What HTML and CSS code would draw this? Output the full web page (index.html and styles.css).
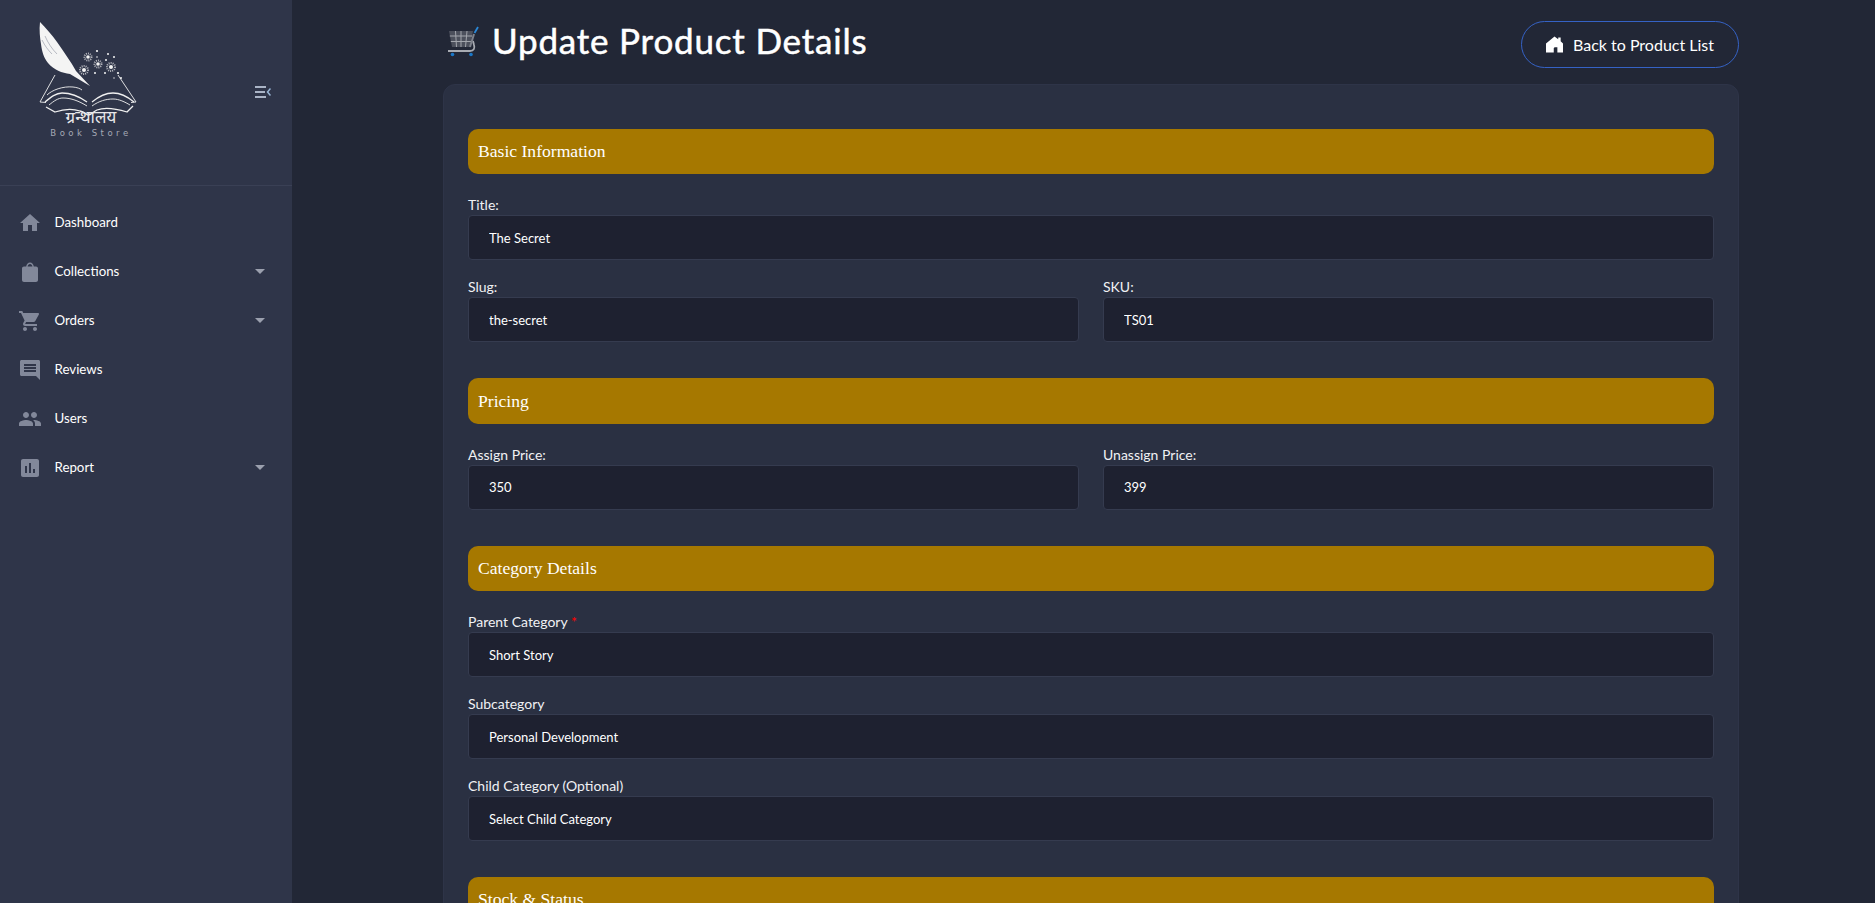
FILE: index.html
```html
<!DOCTYPE html>
<html lang="en">
<head>
<meta charset="utf-8">
<title>Update Product Details</title>
<link rel="stylesheet" href="styles.css">
</head>
<body>
<div class="app">
  <aside class="sidebar">
    <div class="brand">
      <svg class="logo" viewBox="0 0 110 125" width="110" height="125" aria-label="Book Store logo">
        <path class="ink" d="M0 2C-1 10 0 18 1 24c1 8 3 14 7 19 6 7 14 10 22 11l20 12-14-15C31 42 24 32 17 22 12 15 6 8 0 2z"/>
        <path class="slit" d="M2 20c3 6 6 10 10 14M5 16c3 7 7 13 12 18"/>
        <g class="ink-line">
          <path class="thin" d="M15 55 0 82l6 .5M7 75c5-5 16-9 26-8 4 .4 7 1.500 9 3"/>
          <path class="thin" d="M78 55 96 82l-5 .5"/>
          <path d="M5 82c6-5 11-9 17-9 9 0 18 4 25 9"/>
          <path class="thin" d="M9 85c5-4 9-7 14-7 8 0 16 3 24 8"/>
          <path d="M52 82c6-5 14-9 21-9 8 0 15 4 21 9"/>
          <path class="thin" d="M52 86c7-5 14-7 21-7 6 0 12 3 17 6"/>
          <path d="M6 87 15 92c9-3 19-3 25-1 4 1 6 3 8 4 3 0 5-3 9-5 8-3 20-1 30 2l6-6"/>
        </g>
        <g class="halo">
          <circle cx="48" cy="37" r="3.500"/><circle cx="58" cy="44" r="3.500"/><circle cx="71" cy="47" r="4"/><circle cx="44" cy="50" r="4"/>
        </g>
        <g class="ink">
          <circle cx="48" cy="37" r="1.800"/><circle cx="58" cy="44" r="1.800"/><circle cx="71" cy="47" r="2"/><circle cx="44" cy="50" r="2"/>
          <circle cx="57" cy="31" r="1.100"/><circle cx="68" cy="34" r="1"/><circle cx="74" cy="37" r="1"/><circle cx="66" cy="40" r="1"/><circle cx="57" cy="37" r=".8"/>
          <circle cx="78" cy="53" r="1.100"/><circle cx="65" cy="53" r="1"/><circle cx="55" cy="53" r="1"/><circle cx="81" cy="58" r="1"/><circle cx="74" cy="58" r=".7"/>
        </g>
        <text class="logo-hi" x="51" y="103" text-anchor="middle">ग्रन्थालय</text>
        <text class="logo-en" x="51" y="116" text-anchor="middle">Book Store</text>
      </svg>
      <svg class="toggle" viewBox="0 0 16 12" width="16" height="12" aria-hidden="true">
        <path d="M0 1h11M0 6h10M0 11h11"/>
        <path class="toggle-chev" d="M15.500 2.500 12.500 6l3 3.500"/>
      </svg>
    </div>
    <nav class="nav">
      <a class="nav-item"><svg class="nav-icon" viewBox="0 0 24 24"><path d="M10 20v-6h4v6h5v-8h3L12 3 2 12h3v8z"/></svg><span class="nav-label">Dashboard</span></a>
      <a class="nav-item"><svg class="nav-icon" viewBox="0 0 24 24"><path fill-rule="evenodd" d="M18 6.500h-2.200C15.600 4.200 14 2.500 12 2.500S8.400 4.200 8.200 6.500H6c-1.100 0-2 .9-2 2V20c0 1.100.9 2 2 2h12c1.100 0 2-.9 2-2V8.500c0-1.100-.9-2-2-2zM12 4c1.200 0 2.200 1 2.400 2.500H9.600C9.800 5 10.800 4 12 4z"/></svg><span class="nav-label">Collections</span><i class="caret"></i></a>
      <a class="nav-item"><svg class="nav-icon" viewBox="0 0 24 24"><path d="M7 18c-1.100 0-1.990.9-1.990 2S5.900 22 7 22s2-.9 2-2-.9-2-2-2zM1 2v2h2l3.600 7.590-1.350 2.450c-.16.28-.25.61-.25.96 0 1.100.9 2 2 2h12v-2H7.420c-.14 0-.25-.11-.25-.25l.03-.12.9-1.630h7.450c.75 0 1.410-.41 1.750-1.030l3.580-6.490c.08-.14.12-.31.12-.48 0-.55-.45-1-1-1H5.210l-.94-2H1zm16 16c-1.100 0-1.990.9-1.990 2s.89 2 1.990 2 2-.9 2-2-.9-2-2-2z"/></svg><span class="nav-label">Orders</span><i class="caret"></i></a>
      <a class="nav-item"><svg class="nav-icon" viewBox="0 0 24 24"><path fill-rule="evenodd" d="M3.500 2h17c.8 0 1.500.7 1.500 1.500V22l-4-4H3.500C2.700 18 2 17.300 2 16.500v-13C2 2.700 2.700 2 3.500 2zM6 6v2h12V6H6zm0 3v2h12V9H6zm0 3v2h12v-2H6z"/></svg><span class="nav-label">Reviews</span></a>
      <a class="nav-item"><svg class="nav-icon" viewBox="0 0 24 24"><path d="M16 11c1.660 0 2.990-1.340 2.990-3S17.660 5 16 5c-1.660 0-3 1.340-3 3s1.340 3 3 3zm-8 0c1.660 0 2.990-1.340 2.990-3S9.660 5 8 5C6.340 5 5 6.340 5 8s1.340 3 3 3zm0 2c-2.330 0-7 1.170-7 3.500V19h14v-2.500c0-2.330-4.670-3.500-7-3.500zm8 0c-.29 0-.62.02-.97.05 1.160.84 1.970 1.970 1.970 3.450V19h6v-2.500c0-2.330-4.670-3.500-7-3.500z"/></svg><span class="nav-label">Users</span></a>
      <a class="nav-item"><svg class="nav-icon" viewBox="0 0 24 24"><path d="M19 3H5c-1.100 0-2 .9-2 2v14c0 1.100.9 2 2 2h14c1.100 0 2-.9 2-2V5c0-1.100-.9-2-2-2zM9 17H7v-7h2v7zm4 0h-2V7h2v10zm4 0h-2v-4h2v4z"/></svg><span class="nav-label">Report</span><i class="caret"></i></a>
    </nav>
  </aside>
  <main class="main">
    <header class="page-head">
      <div class="page-title">
        <svg class="title-icon" viewBox="0 0 32 32" width="32" height="32" aria-hidden="true">
          <path class="cart-body" d="M2 6h24l-3 16H5z"/>
          <path class="cart-grid" d="M2.800 11h22.400M3.800 16.500h20.400M8.500 6l1 16M14 6v16M20 6l-1.500 16"/>
          <path class="cart-frame" d="M1 26h22c4 0 5-3 4-6l-1-4"/>
          <path class="cart-handle" d="M23 22 27 9"/>
          <path class="cart-blue" d="M27.500 8 31 2"/>
          <circle class="cart-wheel" cx="5.500" cy="29.500" r="1.800"/><circle class="cart-wheel" cx="24" cy="29.500" r="1.800"/>
        </svg>
        <h1 class="title-text">Update Product Details</h1>
      </div>
      <a class="back-btn">
        <svg class="back-icon" viewBox="0 0 16 16" width="17" height="17" aria-hidden="true"><path d="M8 .5 11.500 3V1.500h2.300v3.400L16 7v8.500h-5.300v-5H8.600c-.7 0-1.300.6-1.300 1.300v3.700H0V7z"/></svg>
        <span>Back to Product List</span>
      </a>
    </header>
    <section class="card">
      <h2 class="bar">Basic Information</h2>
      <div class="field"><label class="label">Title:</label><input class="control" value="The Secret"></div>
      <div class="two">
        <div class="field"><label class="label">Slug:</label><input class="control" value="the-secret"></div>
        <div class="field"><label class="label">SKU:</label><input class="control" value="TS01"></div>
      </div>
      <h2 class="bar">Pricing</h2>
      <div class="two">
        <div class="field"><label class="label">Assign Price:</label><input class="control" value="350"></div>
        <div class="field"><label class="label">Unassign Price:</label><input class="control" value="399"></div>
      </div>
      <h2 class="bar">Category Details</h2>
      <div class="field"><label class="label">Parent Category <span class="req">*</span></label><select class="control select"><option>Short Story</option></select></div>
      <div class="field"><label class="label">Subcategory</label><select class="control select"><option>Personal Development</option></select></div>
      <div class="field"><label class="label">Child Category (Optional)</label><select class="control select"><option>Select Child Category</option></select></div>
      <h2 class="bar">Stock &amp; Status</h2>
    </section>
  </main>
</div>
</body>
</html>
```

FILE: styles.css
```css
* { box-sizing: border-box; }
html, body { margin: 0; height: 100%; }
body {
  background: #222736;
  color: #fff;
  font-family: "Lato", "Liberation Sans", sans-serif;
  font-size: 14px;
  overflow: hidden;
}
.app { display: flex; height: 903px; overflow: hidden; }

.sidebar {
  flex: 0 0 292px;
  background: #2f3549;
}
.brand {
  height: 186px;
  border-bottom: 1px solid #3a4055;
  padding: 20px 0 0 40px;
  display: flex;
  align-items: flex-start;
}
.logo { display: block; flex: none; overflow: visible; }
.ink { fill: #f4f4f4; }
.slit { fill: none; stroke: #8d92a0; stroke-width: .6; }
.ink-line { fill: none; stroke: #f0f0f0; stroke-width: 1.300; }
.ink-line .thin { stroke-width: .9; }
.halo { fill: none; stroke: #d8d8dc; stroke-width: 2; stroke-dasharray: 1 1; opacity: .8; }
.logo-hi { fill: #e8e8ea; font: 400 17px "Noto Sans", "Lato", sans-serif; }
.logo-en { fill: #a5a9b5; font: 400 8.500px "DejaVu Sans", sans-serif; letter-spacing: 3.500px; }
.toggle { margin: 66px 0 0 105px; fill: none; stroke: #aab4c6; stroke-width: 2; flex: none; }
.toggle-chev { stroke: #9ab6d6; stroke-width: 1.500; }

.nav { display: flex; flex-direction: column; padding-top: 12px; }
.nav-item {
  display: flex;
  align-items: center;
  height: 49px;
  padding: 0 27px 0 18px;
  color: #fff;
  font-size: 13.300px;
}
.nav-icon { width: 24px; height: 24px; fill: #82889a; flex: none; }
.nav-label { margin-left: 12.500px; padding-bottom: 2px; flex: 1; }
.caret {
  border-left: 5px solid transparent;
  border-right: 5px solid transparent;
  border-top: 5.500px solid #9ba0ae;
}

.main { flex: 1; min-width: 0; padding-left: 151px; }
.page-head {
  width: 1296px;
  height: 84px;
  display: flex;
  align-items: flex-start;
  justify-content: space-between;
}
.page-title { display: flex; align-items: center; margin: 24px 0 0 4px; }
.title-icon { flex: none; }
.title-text {
  margin: -2px 0 0 13px;
  font-family: "Lato", sans-serif;
  font-size: 35px;
  font-weight: 400;
  line-height: 36px;
  letter-spacing: 0.8px;
  -webkit-text-stroke: 0.5px #fff;
  color: #fff;
}
.cart-body { fill: #4c505c; }
.cart-grid { fill: none; stroke: #a2a5ac; stroke-width: 1; }
.cart-frame { fill: none; stroke: #a8abb2; stroke-width: 1.800; }
.cart-handle { fill: none; stroke: #7e828c; stroke-width: 2; }
.cart-blue { fill: none; stroke: #2a88d8; stroke-width: 1.800; }
.cart-wheel { fill: #1b78c8; }

.back-btn {
  margin-top: 21px;
  width: 218px;
  height: 47px;
  display: flex;
  align-items: center;
  justify-content: center;
  gap: 10px;
  border: 1px solid #3562c5;
  border-radius: 24px;
  font-size: 16px;
  color: #fff;
}
.back-icon { fill: #fff; flex: none; }

.card {
  width: 1296px;
  background: #2a3042;
  border: 1px solid #2e3448;
  border-radius: 12px;
  padding: 44px 24px 40px;
}
.bar {
  margin: 0 0 20px;
  height: 45.400px;
  display: flex;
  align-items: center;
  padding: 0 10px;
  background: #a67800;
  border-radius: 10px;
  font-family: "Liberation Serif", serif;
  font-size: 17.600px;
  font-weight: 400;
  color: #fff;
}
.field { display: flex; flex-direction: column; margin-bottom: 16px; }
.two { display: grid; grid-template-columns: 1fr 1fr; gap: 24px; }
.label { line-height: 21px; font-size: 14px; color: #f0f1f4; }
.req { color: #f00; }
.control {
  width: 100%;
  height: 45px;
  padding: 0 20px;
  background: #1e2130;
  border: 1px solid #353b4f;
  border-radius: 4px;
  color: #fff;
  font-family: "Lato", sans-serif;
  font-size: 13px;
  outline: none;
}
.select { appearance: none; -webkit-appearance: none; }
.field + .bar, .two + .bar { margin-top: 36px; }
.field:has(+ .bar), .two:has(+ .bar) > .field { margin-bottom: 0; }
```
